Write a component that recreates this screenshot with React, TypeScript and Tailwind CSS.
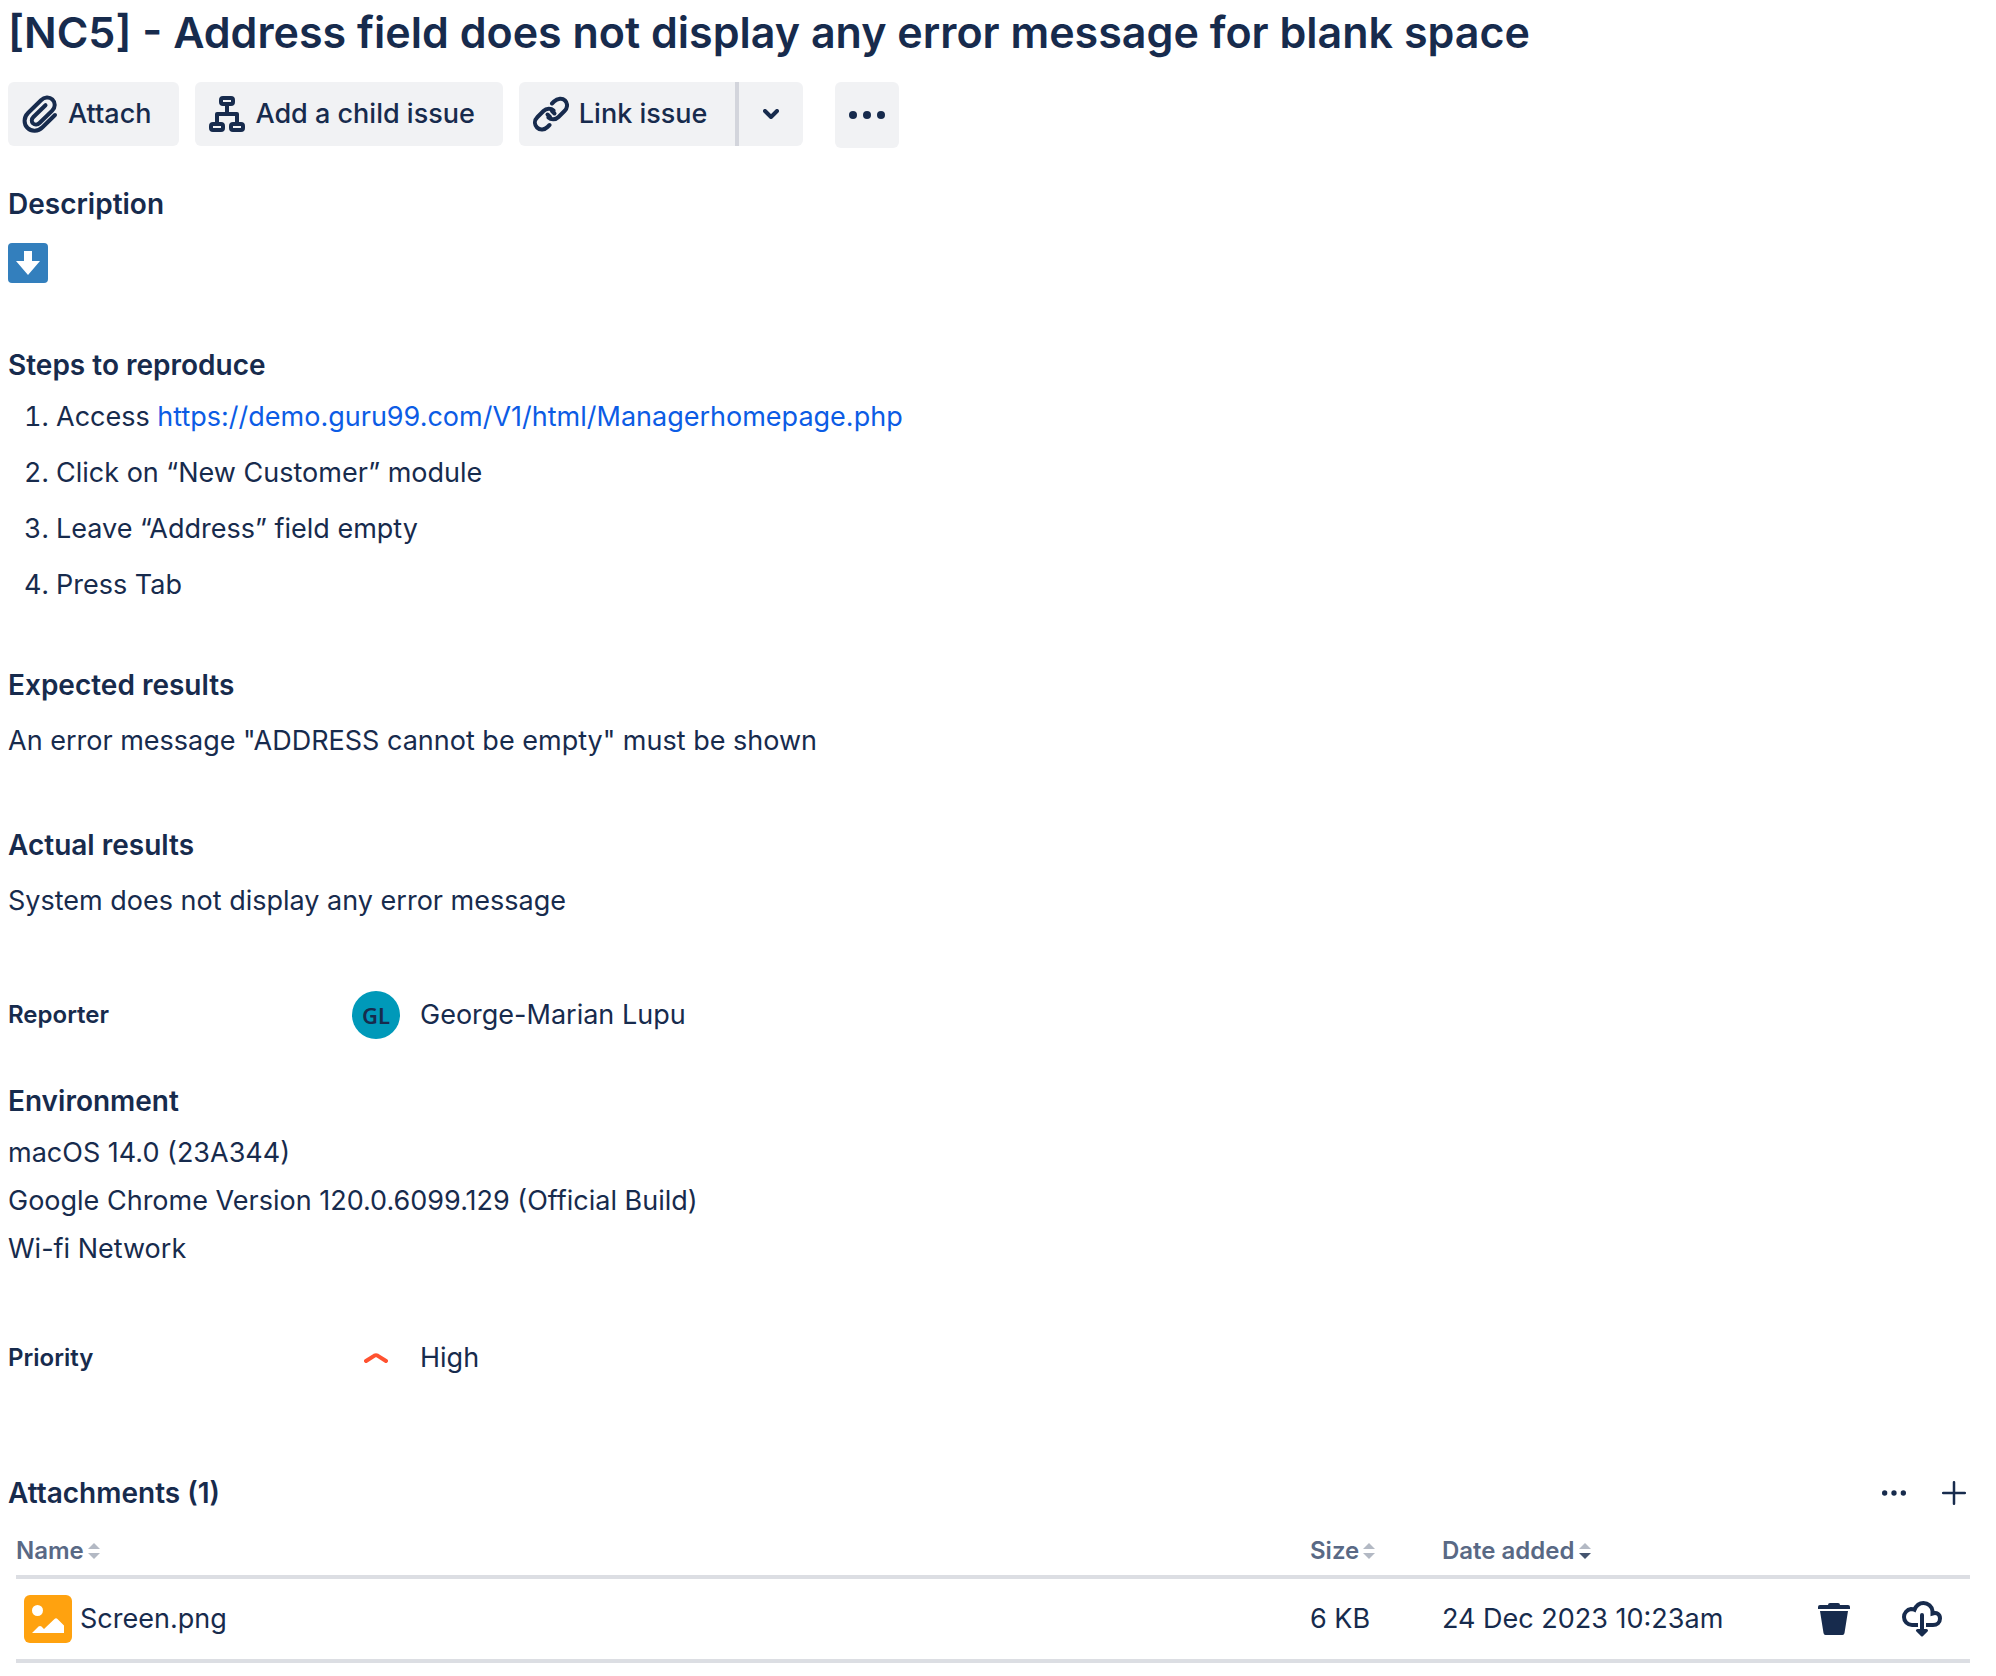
import type { ReactNode } from 'react';

type IconProps = { className?: string };

function AttachIcon({ className }: IconProps) {
  return (
    <svg className={className} viewBox="0 0 36 38" fill="none" stroke="currentColor" strokeWidth="4" strokeLinecap="round" strokeLinejoin="round" aria-hidden="true">
      <path d="M33 20 20.500 32.200C16 36.600 9.500 36.800 5.600 33 1.500 29 1.500 22.500 6 18L19 5.200C22.400 1.800 27.300 1.600 30.400 4.500 33.600 7.600 33.500 12.300 30.200 15.600L17.500 28C15.500 30 12.700 30 11 28.400 9.300 26.700 9.400 24 11.400 22L23.500 10.200" />
    </svg>
  );
}

function ChildIcon({ className }: IconProps) {
  return (
    <svg className={className} viewBox="0 0 36 36" fill="none" stroke="currentColor" strokeWidth="4" aria-hidden="true">
      <rect x="12" y="2" width="12" height="6" rx="2" />
      <rect x="2" y="28" width="12" height="6" rx="2" />
      <rect x="22" y="28" width="12" height="6" rx="2" />
      <path d="M18 8v10M8 28V18h20v10" strokeLinejoin="round" />
    </svg>
  );
}

function LinkIcon({ className }: IconProps) {
  return (
    <svg className={className} viewBox="0 0 36 36" fill="none" stroke="currentColor" strokeWidth="4" strokeLinecap="round" aria-hidden="true">
      <path d="M19 7.500 21 5.500C24.600 2 29.500 2 32 4.500 35 7.500 34.600 12 31.500 15L25.500 21C22.500 24 18 24 15.500 21.500" />
      <path d="M20.500 14.500C18 12 13.500 12 10.500 15L4.500 21C1.500 24 1 28.500 4 31.500 7 34.500 11.500 34 14.500 31L16.500 29" />
      <path d="M14.500 18.500 17 21M21.500 17.500 19 15" />
    </svg>
  );
}

function MoreIcon({ className }: IconProps) {
  return (
    <svg className={className} viewBox="0 0 36 8" fill="currentColor" aria-hidden="true">
      <circle cx="4" cy="4" r="4" />
      <circle cx="18" cy="4" r="4" />
      <circle cx="32" cy="4" r="4" />
    </svg>
  );
}

function SortIcon({ active = false }: { active?: boolean }) {
  return (
    <svg className="h-4 w-3" viewBox="0 0 12 16" aria-hidden="true">
      <path d="M0 6 6 0l6 6z" fill="#b3b9c4" />
      <path d="M0 10h12l-6 6z" fill={active ? '#44546f' : '#b3b9c4'} />
    </svg>
  );
}

function Heading({ children }: { children: ReactNode }) {
  return <h2 className="text-[28px] leading-10 font-semibold">{children}</h2>;
}

const buttonStyle = 'flex h-16 items-center gap-[10px] bg-[#f1f2f4] pr-7 pl-[14px] font-medium';

const steps: ReactNode[] = [
  <>
    Access{' '}
    <a href="https://demo.guru99.com/V1/html/Managerhomepage.php" className="text-[#0c5ce5]">
      https://demo.guru99.com/V1/html/Managerhomepage.php
    </a>
  </>,
  'Click on “New Customer” module',
  'Leave “Address” field empty',
  'Press Tab',
];

const environment = ['macOS 14.0 (23A344)', 'Google Chrome Version 120.0.6099.129 (Official Build)', 'Wi-fi Network'];

export default function App() {
  return (
    <main className="min-h-screen bg-white pr-[26px] pl-2 font-['Inter',sans-serif] text-[27px] leading-10 text-[#172b4d]">
      <h1 className="pt-2 text-[43px] leading-12 font-semibold">
        [NC5] - Address field does not display any error message for blank space
      </h1>

      <div className="mt-[26px] flex items-start gap-4">
        <button type="button" className={`${buttonStyle} rounded-md`}>
          <AttachIcon className="h-[38px] w-9" />
          Attach
        </button>
        <button type="button" className={`${buttonStyle} rounded-md`}>
          <ChildIcon className="size-9" />
          Add a child issue
        </button>
        <div className="flex">
          <button type="button" className={`${buttonStyle} rounded-l-md`}>
            <LinkIcon className="size-9" />
            Link issue
          </button>
          <button type="button" aria-label="More link options" className="flex h-16 w-[68px] items-center justify-center rounded-r-md border-l-4 border-[#d3d5dc] bg-[#f1f2f4]">
            <svg className="h-[10px] w-4" viewBox="0 0 16 10" fill="none" stroke="currentColor" strokeWidth="4" strokeLinecap="round" strokeLinejoin="round" aria-hidden="true">
              <path d="m2 2 6 6 6-6" />
            </svg>
          </button>
        </div>
        <button type="button" aria-label="Actions" className="ml-4 flex h-[66px] w-16 items-center justify-center rounded-md bg-[#f1f2f4]">
          <MoreIcon className="h-2 w-9" />
        </button>
      </div>

      <section className="mt-9">
        <Heading>Description</Heading>
        <svg className="mt-[19px] size-10" viewBox="0 0 40 40" role="img" aria-label="Down arrow">
          <rect width="40" height="40" rx="4" fill="#337fbd" />
          <path d="M16 8h8v10h8L20 32 8 18h8z" fill="#fff" />
        </svg>
      </section>

      <section className="mt-[62px]">
        <Heading>Steps to reproduce</Heading>
        <ol className="mt-3 flex list-decimal flex-col gap-4 pl-12">
          {steps.map((step, i) => (
            <li key={i}>{step}</li>
          ))}
        </ol>
      </section>

      <section className="mt-[60px]">
        <Heading>Expected results</Heading>
        <p className="mt-4">An error message "ADDRESS cannot be empty" must be shown</p>
      </section>

      <section className="mt-16">
        <Heading>Actual results</Heading>
        <p className="mt-4">System does not display any error message</p>
      </section>

      <section className="mt-[70px] flex items-center">
        <h2 className="w-[344px] text-2xl font-semibold">Reporter</h2>
        <span className="flex size-12 items-center justify-center rounded-full bg-[#0099b9] font-['Noto_Sans'] text-[22px] font-semibold">GL</span>
        <span className="ml-5">George-Marian Lupu</span>
      </section>

      <section className="mt-[42px]">
        <Heading>Environment</Heading>
        <div className="mt-2">
          {environment.map((line) => (
            <p key={line} className="leading-12">{line}</p>
          ))}
        </div>
      </section>

      <section className="mt-[61px] flex items-center">
        <h2 className="w-[344px] text-2xl font-semibold">Priority</h2>
        <span className="flex size-12 items-center justify-center">
          <svg className="h-[10px] w-6" viewBox="0 0 24 10" fill="none" stroke="#ff5230" strokeWidth="4" strokeLinecap="round" strokeLinejoin="round" aria-hidden="true">
            <path d="M2 8 10.500 2.600q1.500-.8 3 0L22 8" />
          </svg>
        </span>
        <span className="ml-5">High</span>
      </section>

      <section className="mt-[91px]">
        <div className="flex items-center justify-between">
          <Heading>Attachments (1)</Heading>
          <div className="flex items-center gap-9 pr-1">
            <button type="button" aria-label="Attachment options">
              <MoreIcon className="h-[6px] w-6" />
            </button>
            <button type="button" aria-label="Add attachment">
              <svg className="size-6" viewBox="0 0 24 24" stroke="currentColor" strokeWidth="2.500" strokeLinecap="round" aria-hidden="true">
                <path d="M12 1.200v21.600M1.200 12h21.600" />
              </svg>
            </button>
          </div>
        </div>
        <table className="mt-3 ml-2 w-[calc(100%-8px)] table-fixed border-collapse text-left">
          <colgroup>
            <col />
            <col className="w-[132px]" />
            <col className="w-[364px]" />
            <col className="w-[164px]" />
          </colgroup>
          <thead>
            <tr className="border-b-4 border-[#dcdee3] text-2xl leading-10 text-[#596985]">
              <th className="pt-[6px] pb-1 font-semibold">
                <button type="button" className="flex items-center gap-1">Name<SortIcon /></button>
              </th>
              <th className="pt-[6px] pb-1 font-semibold">
                <button type="button" className="flex items-center gap-1">Size<SortIcon /></button>
              </th>
              <th className="pt-[6px] pb-1 font-semibold">
                <button type="button" className="flex items-center gap-1">Date added<SortIcon active /></button>
              </th>
              <th aria-label="Actions" />
            </tr>
          </thead>
          <tbody>
            <tr className="h-[84px] border-b-4 border-[#dcdee3]">
              <td>
                <div className="flex items-center gap-2 pl-2">
                  <svg className="size-12" viewBox="0 0 48 48" aria-hidden="true">
                    <rect width="48" height="48" rx="6" fill="#ffa20f" />
                    <circle cx="13.500" cy="15.500" r="5.500" fill="#fff" />
                    <path d="M8 38 14.500 31.500q1.500-1.200 3 0L20 34 30.500 24q1.500-1.500 3 0L40 30.500V38z" fill="#fff" />
                  </svg>
                  Screen.png
                </div>
              </td>
              <td>6 KB</td>
              <td>24 Dec 2023 10:23am</td>
              <td>
                <div className="flex items-center gap-[52px] pl-3">
                  <button type="button" aria-label="Delete Screen.png">
                    <svg className="size-8" viewBox="0 0 32 32" fill="currentColor" aria-hidden="true">
                      <path d="M0 6V4q0-2 2-2h8q0-2 2-2h8q2 0 2 2h8q2 0 2 2v2zM2 8h28l-3.500 22q-.3 2-2 2h-17q-1.700 0-2-2z" />
                    </svg>
                  </button>
                  <button type="button" aria-label="Download Screen.png">
                    <svg className="h-9 w-10" viewBox="0 0 40 36" fill="none" stroke="currentColor" strokeWidth="4" aria-hidden="true">
                      <path d="M16 24h-6C5.500 24 2 20.500 2 16c0-4 3-7.500 7-8 1.500 0 2.500.3 3.500.8C14 5 17.500 2 21.500 2 26 2 30 5.500 30.500 10v2.500C35 11 38 13.500 38 17.500c0 3.800-3 6.500-7 6.500h-7" />
                      <path d="M20 14v16" strokeLinecap="round" />
                      <path d="M15.500 29.500h9L20 34z" fill="currentColor" strokeWidth="3" strokeLinejoin="round" />
                    </svg>
                  </button>
                </div>
              </td>
            </tr>
          </tbody>
        </table>
      </section>
    </main>
  );
}
